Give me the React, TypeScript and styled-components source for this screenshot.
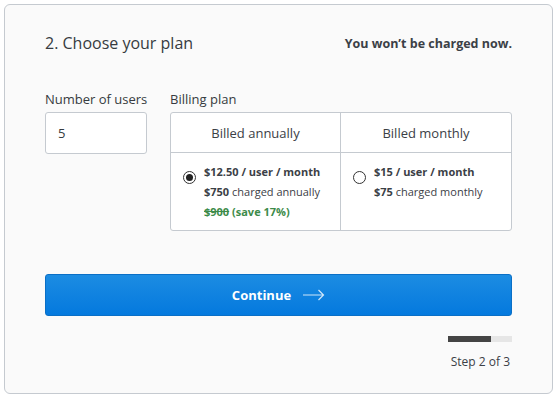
import React, { useState } from 'react';
import styled, { createGlobalStyle } from 'styled-components';

const GlobalStyle = createGlobalStyle`
  html, body {
    margin: 0;
    padding: 0;
    background: #ffffff;
  }
  body {
    font-family: 'Open Sans', 'Noto Sans', sans-serif;
    color: #333a40;
  }
  * { box-sizing: border-box; }
`;

type Plan = 'annual' | 'monthly';

const App: React.FC = () => {
  const [plan, setPlan] = useState<Plan>('annual');
  const [users, setUsers] = useState('5');

  return (
    <>
      <GlobalStyle />
      <Page>
        <Card>
          <HeaderRow>
            <Title>2. Choose your plan</Title>
            <Notice>You won’t be charged now.</Notice>
          </HeaderRow>

          <FieldsRow>
            <UsersField>
              <FieldLabel htmlFor="users">Number of users</FieldLabel>
              <UsersInput id="users" value={users} onChange={(e) => setUsers(e.target.value)} />
            </UsersField>

            <BillingField>
              <FieldLabel as="div">Billing plan</FieldLabel>
              <PlanTable>
                <PlanHead>Billed annually</PlanHead>
                <PlanHead>Billed monthly</PlanHead>
                <PlanCell onClick={() => setPlan('annual')}>
                  <Radio $checked={plan === 'annual'} />
                  <PlanText>
                    <Price>$12.50 / user / month</Price>
                    <Line><strong>$750</strong> charged annually</Line>
                    <Saving><s>$900</s> (save 17%)</Saving>
                  </PlanText>
                </PlanCell>
                <PlanCell onClick={() => setPlan('monthly')}>
                  <Radio $checked={plan === 'monthly'} />
                  <PlanText>
                    <Price>$15 / user / month</Price>
                    <Line><strong>$75</strong> charged monthly</Line>
                  </PlanText>
                </PlanCell>
              </PlanTable>
            </BillingField>
          </FieldsRow>

          <ContinueButton type="button">
            Continue
            <svg width="22" height="12" viewBox="0 0 22 12" fill="none">
              <path d="M0 6h20.5M15.5 1l5 5-5 5" stroke="rgba(255,255,255,0.8)" strokeWidth="1.2" />
            </svg>
          </ContinueButton>

          <Footer>
            <Progress>
              <ProgressFill style={{ width: `${(2 / 3) * 100}%` }} />
            </Progress>
            <StepText>Step 2 of 3</StepText>
          </Footer>
        </Card>
      </Page>
    </>
  );
};

export default App;

const Page = styled.div`
  padding: 4px 7px 9px 4px;
`;

const Card = styled.div`
  width: 549px;
  height: 390px;
  background: #fafafa;
  border: 1px solid #c5cad0;
  border-radius: 6px;
  padding: 26px 40px 0 40px;
  display: flex;
  flex-direction: column;
`;

const HeaderRow = styled.div`
  display: flex;
  justify-content: space-between;
  align-items: center;
  height: 24px;
`;

const Title = styled.h2`
  margin: 0;
  font-size: 16px;
  font-weight: 400;
  color: #363b40;
`;

const Notice = styled.div`
  font-size: 12.5px;
  font-weight: 700;
  color: #3b4046;
`;

const FieldsRow = styled.div`
  display: flex;
  gap: 23px;
  margin-top: 35px;
`;

const UsersField = styled.div`
  display: flex;
  flex-direction: column;
  width: 102px;
`;

const BillingField = styled.div`
  display: flex;
  flex-direction: column;
  flex: 1;
`;

const FieldLabel = styled.label`
  font-size: 13px;
  line-height: 18px;
  height: 18px;
  margin-bottom: 4px;
  color: #363b40;
  white-space: nowrap;
`;

const UsersInput = styled.input`
  width: 102px;
  height: 42px;
  border: 1px solid #c5cad0;
  border-radius: 3px;
  background: #ffffff;
  padding: 0 12px;
  font-family: 'Open Sans', 'Noto Sans', sans-serif;
  font-size: 13px;
  color: #363b40;
  outline: none;
`;

const PlanTable = styled.div`
  display: grid;
  grid-template-columns: 1fr 1fr;
  grid-template-rows: 40px 77px;
  background: #ffffff;
  border: 1px solid #c5cad0;
  border-radius: 3px;
  overflow: hidden;
  & > *:nth-child(odd) {
    border-right: 1px solid #c5cad0;
  }
`;

const PlanHead = styled.div`
  display: flex;
  align-items: center;
  justify-content: center;
  font-size: 13px;
  color: #3b4046;
  border-bottom: 1px solid #c5cad0;
`;

const PlanCell = styled.div`
  display: flex;
  align-items: flex-start;
  gap: 8px;
  padding: 9px 12px 0 12px;
  cursor: pointer;
`;

const Radio = styled.span<{ $checked: boolean }>`
  flex: none;
  width: 13px;
  height: 13px;
  margin-top: 9px;
  border-radius: 50%;
  border: 1px solid #333;
  background: #fff;
  position: relative;
  &::after {
    content: '';
    display: ${(p) => (p.$checked ? 'block' : 'none')};
    position: absolute;
    left: 2px;
    top: 2px;
    width: 7px;
    height: 7px;
    border-radius: 50%;
    background: #222;
  }
`;

const PlanText = styled.div`
  display: flex;
  flex-direction: column;
  font-size: 11px;
  line-height: 20px;
  color: #3b4046;
`;

const Price = styled.div`
  font-weight: 700;
`;

const Line = styled.div`
  strong { font-weight: 700; }
`;

const Saving = styled.div`
  font-weight: 700;
  color: #3d8b4a;
`;

const ContinueButton = styled.button`
  margin-top: 43px;
  height: 42px;
  width: 100%;
  border: 1px solid #0a6fc6;
  border-radius: 3px;
  background: linear-gradient(#1c8ce2, #0479de);
  color: #ffffff;
  font-family: 'Open Sans', 'Noto Sans', sans-serif;
  font-size: 13px;
  font-weight: 700;
  display: flex;
  align-items: center;
  justify-content: center;
  gap: 12px;
  cursor: pointer;
`;

const Footer = styled.div`
  display: flex;
  flex-direction: column;
  align-items: flex-end;
  margin-top: 20px;
`;

const Progress = styled.div`
  width: 64px;
  height: 6px;
  background: #e6e6e6;
`;

const ProgressFill = styled.div`
  height: 100%;
  background: #444444;
`;

const StepText = styled.div`
  margin-top: 11px;
  font-size: 12px;
  color: #3b4046;
  padding-right: 2px;
`;
